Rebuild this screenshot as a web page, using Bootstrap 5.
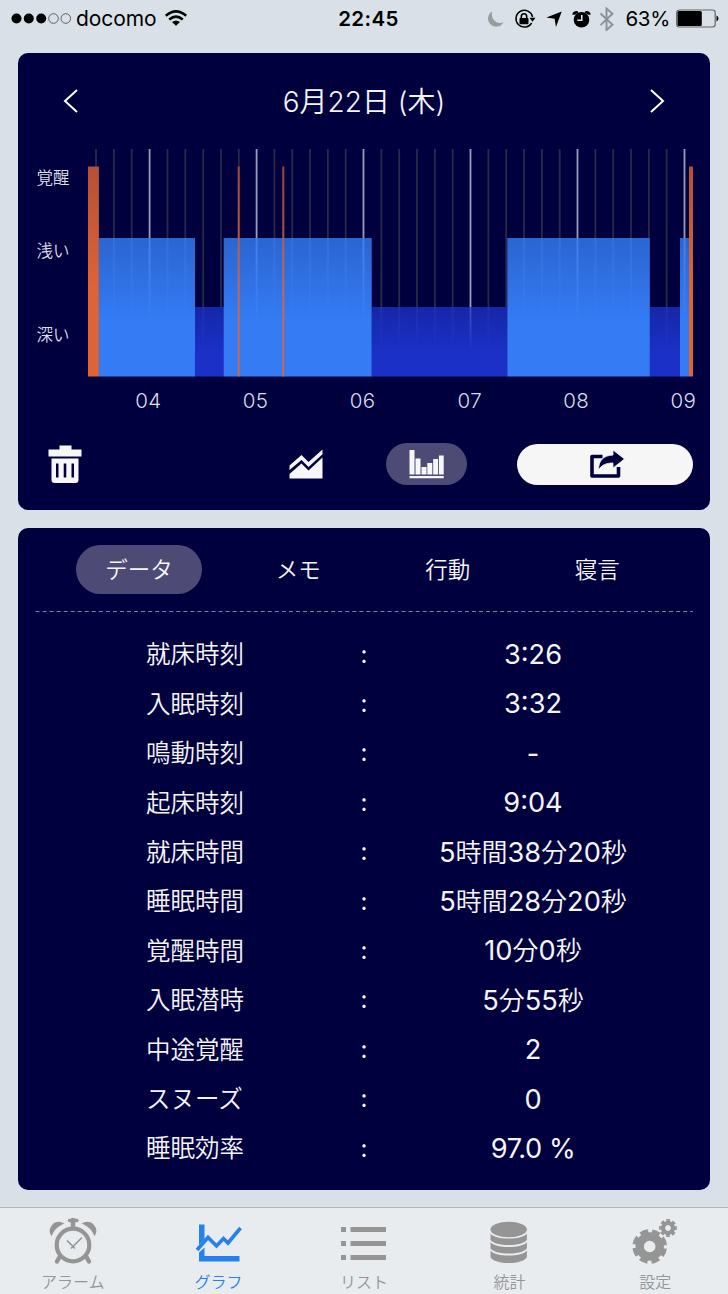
<!DOCTYPE html>
<html lang="ja">
<head>
<meta charset="utf-8">
<meta name="viewport" content="width=device-width, initial-scale=1">
<title>睡眠グラフ</title>
<link href="https://cdn.jsdelivr.net/npm/bootstrap@5.3.0/dist/css/bootstrap.min.css" rel="stylesheet">
<style>
body{width:728px;height:1294px;overflow:hidden;background:#d9e0e7;font-family:Inter,"Noto Sans CJK JP",sans-serif;color:#f5f5f7}
svg{display:block;flex:none}
.status{height:53px;padding:0 10px 0 11px;color:#000;font-size:21px;line-height:37px}
.status>div{height:37px}
.side{flex:1 1 0}
.carrier{letter-spacing:-.1px;margin-left:4px}
.clock{font-weight:600;font-size:20.5px;width:80px;text-align:center;letter-spacing:.4px;margin-left:8px}
.battery-text{font-size:20.500px;margin-left:0;letter-spacing:-.3px}
.panel{background:#01003f;border-radius:10px;margin:0 18px}
.panel-graph{height:457px;margin-bottom:18px}
.panel-data{height:662px;margin-bottom:17px}
.day-head{height:83px;padding:12px 45px 0}
.day-title{font-size:28px;font-weight:350;line-height:1;padding-top:3px}
.tools{height:50px;padding:0 17.5px 0 30px;margin-top:19px}
.pill{border-radius:40px;background:#4d4a76}
.pill-bars{width:81px;height:42px;margin-left:63px}
.share{width:176px;height:41px;background:#f6f6f7;border-radius:21px;margin-left:50px}
.tabs{height:83px;padding:0 0 0 47px;font-size:22.5px;font-weight:350}
.tab-item{width:149.5px;height:49px}
.tab-item span{display:flex;width:126px;height:49px;align-items:center;justify-content:center}
.tab-item .off{margin-left:18px}
.tab-item .pill{margin-left:11px}
.facts{padding-top:17px}
.fact{height:49.4px;display:grid;grid-template-columns:128px 198px 40px 298px;align-items:center}
.fact dt{grid-column:2;font-size:24.5px;font-weight:350;line-height:1}
.fact i{font-style:normal;font-size:24px;font-weight:400;line-height:1;text-align:center}
.fact dd{margin:0;text-align:center;font-size:27.2px;font-weight:400;line-height:1;white-space:nowrap}
.fact dd span{font-size:26px;font-weight:350}
.tabbar{height:87px;background:#e8ecef;border-top:1px solid #b3b7ba;color:#959595;font-size:16px;font-weight:350}
.tabbar a{width:145.6px;color:inherit;text-decoration:none;padding-top:8px}
.tabbar a span{line-height:20px;margin-top:6px}
.tabbar a.on{color:#2580f0}
</style>
</head>
<body>
<header class="status d-flex justify-content-between">
  <div class="side d-flex align-items-center">
    <svg width="61" height="12" viewBox="0 0 61 12"><circle cx="5.5" cy="5.500" r="5"/><circle cx="17.8" cy="5.500" r="5"/><circle cx="30.2" cy="5.500" r="5"/><g fill="none" stroke="#444" stroke-width=".8"><circle cx="42.5" cy="5.500" r="4.8"/><circle cx="54.8" cy="5.500" r="4.8"/></g></svg>
    <span class="carrier">docomo</span>
    <svg class="ms-2" width="24" height="18" viewBox="0 0 24 18" fill="none" stroke="#000" stroke-width="2.5"><path d="M1.800 5.700Q12-3 22.200 5.700M5.200 9.500Q12 3.800 18.800 9.500"/><path d="M8 12q4-3.200 8 0l-4 3.800z" fill="#000" stroke="none"/></svg>
  </div>
  <div class="clock flex-shrink-0">22:45</div>
  <div class="side d-flex align-items-center justify-content-end">
    <svg width="140" height="24" viewBox="486 6 140 24">
      <path d="M493.500 10.200a8.200 8.200 0 1 0 11 11.100 8.500 8.500 0 0 1-11-11.100z" fill="#999da0"/>
      <path d="M532.600 22a8.400 8.400 0 1 1 1-6" fill="none" stroke="#000" stroke-width="1.500"/><path d="M530.500 16.700h6l-3 4z"/><rect x="520.500" y="17" width="9" height="6.200" rx="1"/><path d="M522.300 17.500v-1.800a2.700 2.900 0 0 1 5.400 0v1.800" fill="none" stroke="#000" stroke-width="1.600"/>
      <path d="M562.700 10.400l-5.700 15.600-1.400-8.200-8.200-1.200z"/>
      <circle cx="582.500" cy="18.800" r="7.800"/><path d="M575.500 13.700l-2.200 0a4 4 0 0 1 5.500-3.500l.4 1.500zM589.500 13.700l2.200 0a4 4 0 0 0-5.500-3.500l-.4 1.500z"/><path d="M582.800 14v5.200h-4.500" fill="none" stroke="#d9e0e7" stroke-width="1.600"/>
      <path d="M601.500 12.500l12 11.300-6 5.200V7.500l6 5.300-12 11.300" fill="none" stroke="#8b9195" stroke-width="1.900"/>
    </svg>
    <span class="battery-text">63%</span>
    <svg style="margin:0 -1px 0 6px" width="43" height="19" viewBox="0 0 43 19"><rect x=".7" y="1" width="38.500" height="17" rx="2.700" fill="none" stroke="#666" stroke-width="1.200"/><rect x="1.500" y="2" width="24.300" height="15" rx="1.500"/><path d="M40.500 6.500q2 1 2 3t-2 3z"/></svg>
  </div>
</header>

<main>
<section class="panel panel-graph">
  <div class="day-head d-flex justify-content-between align-items-center">
    <svg width="15" height="24" viewBox="0 0 15 24" fill="none" stroke="#fff" stroke-width="2"><path d="M14 1L2 12l12 11"/></svg>
    <h1 class="day-title m-0">6月22日 (木)</h1>
    <svg width="15" height="24" viewBox="0 0 15 24" fill="none" stroke="#fff" stroke-width="2"><path d="M1 1l12 11L1 23"/></svg>
  </div>
  <svg width="692" height="284" viewBox="18 136 692 284">
    <defs>
      <linearGradient id="light" gradientUnits="userSpaceOnUse" x1="0" y1="238" x2="0" y2="320"><stop stop-color="#2b65d1"/><stop offset="1" stop-color="#347bf4"/></linearGradient>
      <linearGradient id="deep" gradientUnits="userSpaceOnUse" x1="0" y1="307" x2="0" y2="352"><stop stop-color="#1527a8"/><stop offset="1" stop-color="#1a30c6"/></linearGradient>
      <linearGradient id="wake" gradientUnits="userSpaceOnUse" x1="0" y1="167" x2="0" y2="290"><stop stop-color="#b55038"/><stop offset="1" stop-color="#de6437"/></linearGradient>
      <linearGradient id="fade" gradientUnits="userSpaceOnUse" x1="0" y1="238" x2="0" y2="325"><stop stop-color="#5b94f8"/><stop offset="1" stop-color="#347bf4"/></linearGradient>
      <linearGradient id="fade2" gradientUnits="userSpaceOnUse" x1="0" y1="307" x2="0" y2="352"><stop stop-color="#5360c8"/><stop offset="1" stop-color="#1a30c6"/></linearGradient>
    </defs>
    <path stroke="#292948" stroke-width="1.800" d="M96 149v225M113.900 149v225M131.700 149v225M167.500 149v225M185.300 149v225M203.200 149v225M221 149v225M238.800 149v225M274.400 149v225M292.200 149v225M310 149v225M327.900 149v225M345.700 149v225M381.300 149v225M399.200 149v225M417 149v225M434.900 149v225M452.700 149v225M488.400 149v225M506.200 149v225M524 149v225M541.900 149v225M559.700 149v225M595.400 149v225M613.200 149v225M631 149v225M648.900 149v225M666.700 149v225"/>
    <path stroke="#9c9bb7" stroke-width="1.800" d="M149.600 149v225M256.600 149v225M363.500 149v225M470.500 149v225M577.500 149v225M684.500 149v225"/>
    <path fill="url(#deep)" d="M195 307h29v69.500h-29zM371.700 307H507.300v69.500H371.700zM650 307h30v69.500h-30z"/>
    <path fill="url(#light)" d="M98.700 238H195v138.500H98.700zM223.700 238h148v138.500h-148zM507.300 238h142.500v138.500H507.300zM680 238h9.200v138.500H680z"/>
    <path fill="url(#fade)" opacity=".2" d="M113 238h2v87h-2zM130.700 238h2v87h-2zM166.500 238h2v87h-2zM184.300 238h2v87h-2zM273.400 238h2v87h-2zM291.200 238h2v87h-2zM309 238h2v87h-2zM326.900 238h2v87h-2zM344.700 238h2v87h-2zM523 238h2v87h-2zM540.900 238h2v87h-2zM558.700 238h2v87h-2zM594.400 238h2v87h-2zM612.200 238h2v87h-2zM630 238h2v87h-2z"/>
    <path fill="url(#fade)" opacity=".6" d="M148.700 238h1.800v87h-1.800zM255.700 238h1.800v87h-1.800zM362.600 238h1.800v87h-1.800zM576.600 238h1.800v87h-1.800zM683.600 238h1.800v87h-1.800z"/>
    <path fill="url(#fade2)" opacity=".7" d="M469.600 307h1.800v45h-1.800z"/>
    <path fill="url(#fade2)" opacity=".15" d="M202.200 307h2v45h-2zM380.300 307h2v45h-2zM398.200 307h2v45h-2zM416 307h2v45h-2zM433.900 307h2v45h-2zM451.700 307h2v45h-2zM487.400 307h2v45h-2zM665.700 307h2v45h-2z"/>
    <path fill="url(#wake)" d="M88 166.500h10.900v210H88zM689 166.500h4v210h-4z"/>
    <path fill="url(#wake)" opacity=".86" d="M237.700 166.500h2v210h-2zM282.300 166.500h2v210h-2z"/>
    <g fill="#dcdce5" font-size="16.500" font-weight="350"><text x="36.500" y="183.500">覚醒</text><text x="36.500" y="256.500">浅い</text><text x="36.500" y="340.500">深い</text></g>
    <g fill="#dcdce5" font-size="20.500" font-weight="350" text-anchor="middle" letter-spacing=".4"><text x="148.500" y="407.500">04</text><text x="255.600" y="407.500">05</text><text x="362.600" y="407.500">06</text><text x="469.800" y="407.500">07</text><text x="576.300" y="407.500">08</text><text x="683.300" y="407.500">09</text></g>
  </svg>
  <div class="tools d-flex align-items-center">
    <svg width="34" height="38" viewBox="0 0 34 38" fill="#f7f7f9"><path d="M.500 4.500h11V.500h12v4h10v7H.500z"/><path fill-rule="evenodd" d="M3.500 13.500h27V35q0 3-3 3h-21q-3 0-3-3zM8 18.500v14h2.500v-14zM15.700 18.500v14h2.600v-14zM23.500 18.500v14H26v-14z"/></svg>
    <svg style="margin-left:206.500px" width="34" height="30" viewBox="0 0 34 30" fill="#f7f7f9"><path d="M.500 16.500L12.500 6l7 7L33.500.500v4.700L19.500 18l-7-7L.500 21z"/><path d="M.500 25l12-10.500 7 7L33.500 8.500v21H.500z"/></svg>
    <div class="pill pill-bars d-flex align-items-center justify-content-center"><svg width="35" height="30" viewBox="0 0 35 30" fill="#f7f7f9"><path d="M.500 1h5v24.500h-5zM6.500 9.500h5v16h-5zM12.500 18h5v7.500h-5zM18.300 14h5v11.500h-5zM24.200 10h4.800v15.500h-4.800zM29.900 6.500h4.800v19h-4.800zM.500 27h34.200v2.300H.500z"/></svg></div>
    <div class="share d-flex align-items-center justify-content-center"><svg class="ms-1" width="36" height="30" viewBox="0 0 36 30"><path d="M13.500 7.500H3V27h26.500v-9" fill="none" stroke="#01003f" stroke-width="3.600" stroke-linejoin="round"/><path d="M24 1L35.500 10 24 19v-5c-7 0-11.500 2-14.500 7C9.500 12 14 6.500 24 6z" fill="#01003f" stroke="#f6f6f7" stroke-width=".8"/></svg></div>
  </div>
</section>

<section class="panel panel-data">
  <nav class="tabs d-flex align-items-center">
    <div class="tab-item"><span class="pill">データ</span></div>
    <div class="tab-item d-flex justify-content-center"><span class="off">メモ</span></div>
    <div class="tab-item d-flex justify-content-center"><span class="off">行動</span></div>
    <div class="tab-item d-flex justify-content-center"><span class="off">寝言</span></div>
  </nav>
  <svg width="692" height="2" viewBox="0 0 692 2"><path d="M17.500 .500H675" stroke="#8180a2" stroke-width="1" stroke-dasharray="4 3.040"/></svg>
  <dl class="facts m-0">
    <div class="fact"><dt>就床時刻</dt><i>:</i><dd>3:26</dd></div>
    <div class="fact"><dt>入眠時刻</dt><i>:</i><dd>3:32</dd></div>
    <div class="fact"><dt>鳴動時刻</dt><i>:</i><dd>-</dd></div>
    <div class="fact"><dt>起床時刻</dt><i>:</i><dd>9:04</dd></div>
    <div class="fact"><dt>就床時間</dt><i>:</i><dd>5<span>時間</span>38<span>分</span>20<span>秒</span></dd></div>
    <div class="fact"><dt>睡眠時間</dt><i>:</i><dd>5<span>時間</span>28<span>分</span>20<span>秒</span></dd></div>
    <div class="fact"><dt>覚醒時間</dt><i>:</i><dd>10<span>分</span>0<span>秒</span></dd></div>
    <div class="fact"><dt>入眠潜時</dt><i>:</i><dd>5<span>分</span>55<span>秒</span></dd></div>
    <div class="fact"><dt>中途覚醒</dt><i>:</i><dd>2</dd></div>
    <div class="fact"><dt>スヌーズ</dt><i>:</i><dd>0</dd></div>
    <div class="fact"><dt>睡眠効率</dt><i>:</i><dd style="letter-spacing:-.4px">97.0 %</dd></div>
  </dl>
</section>
</main>

<nav class="tabbar d-flex">
  <a href="#" class="d-flex flex-column align-items-center">
    <svg width="48" height="50" viewBox="49 1216 48 50" fill="none" stroke="#959595"><circle cx="73" cy="1245" r="16.300" stroke-width="4.200"/><path d="M73 1220v7M59.500 1257l-2.500 4.500M86.500 1257l2.500 4.500" stroke-width="4.400" stroke-linecap="round"/><path d="M69.500 1220.500h7.500" stroke-width="3.400" stroke-linecap="round"/><path d="M67 1240.500l8 8M82 1237.500l-11 11" stroke-width="1.600"/><path d="M51.500 1234.500C48 1229 54 1220 62.500 1223.500 57 1226 53.500 1229.500 51.500 1234.500zM94.500 1234.500C98 1229 92 1220 83.500 1223.500 89 1226 92.500 1229.500 94.500 1234.500z" fill="#959595" stroke-width="1.500"/></svg>
    <span>アラーム</span></a>
  <a href="#" class="on d-flex flex-column align-items-center">
    <svg width="48" height="50" viewBox="194.500 1216 48 50" fill="none" stroke="#2580f0"><path d="M199.500 1224.500h5.500v14.500l-5.500 6zM199.500 1252.500l5.500-5v8.500h35v5.500h-40.500z" fill="#2580f0" stroke="none"/><path d="M197.500 1250l11-12.500 8.500 8.500 7-7.500 4.500 4.500 12.500-15" stroke-width="3.600"/></svg>
    <span>グラフ</span></a>
  <a href="#" class="d-flex flex-column align-items-center">
    <svg width="48" height="50" viewBox="340 1216 48 50" fill="#959595"><path d="M341 1227h5v5h-5zM350.500 1227H386v5h-35.500zM341 1241h5v5h-5zM350.500 1241H386v5h-35.500zM341 1255h5v5h-5zM350.500 1255H386v5h-35.500z"/></svg>
    <span>リスト</span></a>
  <a href="#" class="d-flex flex-column align-items-center">
    <svg width="48" height="50" viewBox="486 1216 48 50" fill="#959595"><ellipse cx="508.700" cy="1229.500" rx="18.200" ry="7.800"/><path d="M490.500 1233.500c4 6.800 32.400 6.800 36.400 0v6.300c-4 7-32.400 7-36.400 0zM490.500 1242c4 6.800 32.400 6.800 36.400 0v6.300c-4 7-32.400 7-36.400 0zM490.500 1250.500c4 6.800 32.400 6.800 36.400 0v6.500c-4 8-32.400 8-36.400 0z"/></svg>
    <span>統計</span></a>
  <a href="#" class="d-flex flex-column align-items-center">
    <svg width="48" height="50" viewBox="631 1216 48 50" fill="none" stroke="#959595"><g transform="translate(649.700 1246.500)"><circle r="10" stroke-width="8.400"/><circle r="14.900" stroke-width="4.800" stroke-dasharray="7.800 3.902" transform="rotate(7.500)"/></g><g transform="translate(668 1228)"><circle r="5" stroke-width="4.200"/><circle r="7.500" stroke-width="2.800" stroke-dasharray="3.600 2.290" transform="rotate(-13.700)"/></g></svg>
    <span>設定</span></a>
</nav>
<script src="https://cdn.jsdelivr.net/npm/bootstrap@5.3.0/dist/js/bootstrap.bundle.min.js"></script>
</body>
</html>
